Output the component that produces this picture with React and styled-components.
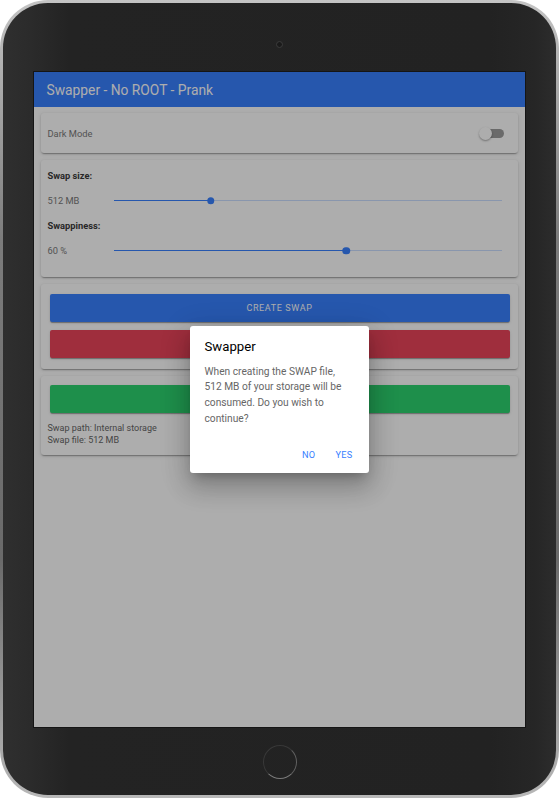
import React from 'react';
import styled, { createGlobalStyle } from 'styled-components';

const GlobalStyle = createGlobalStyle`
  html, body {
    margin: 0;
    padding: 0;
    background: #ffffff;
  }
  body {
    font-family: Roboto, "Liberation Sans", Arial, sans-serif;
  }
`;

const PRIMARY = '#3880ff';
const DANGER = '#eb445a';
const SUCCESS = '#2dd36f';

const Device = styled.div`
  width: 559px;
  height: 798px;
  box-sizing: border-box;
  padding: 3px;
  border-radius: 48px;
  background: linear-gradient(180deg, #c4c4c4 0%, #7c7c7c 30%, #6a6a6a 70%, #b8b8b8 100%);
`;

const Bezel = styled.div`
  height: 100%;
  border-radius: 45px;
  display: flex;
  flex-direction: column;
  align-items: center;
  background: linear-gradient(90deg, #2f2f2f 0%, #2b2b2b 5%, #232323 12%, #222222 88%, #262626 96%, #2c2c2c 100%);
`;

const TopBezel = styled.div`
  height: 69px;
  box-sizing: border-box;
  padding-top: 38px;
  display: flex;
  justify-content: center;
`;

const Camera = styled.div`
  width: 7px;
  height: 7px;
  border-radius: 50%;
  background: #1a1a1a;
  border: 1px solid #3c3c3c;
  box-sizing: border-box;
`;

const BottomBezel = styled.div`
  flex: 1;
  display: flex;
  align-items: center;
  justify-content: center;
  padding-top: 2px;
`;

const HomeButton = styled.div`
  width: 34px;
  height: 34px;
  box-sizing: border-box;
  border-radius: 50%;
  border: 1.5px solid #383838;
  border-right-color: #606060;
  border-bottom-color: #7a7a7a;
`;

const Screen = styled.div`
  position: relative;
  width: 491px;
  height: 655px;
  margin-left: -1px;
  background: #ffffff;
  overflow: hidden;
  outline: 1px solid #151515;
`;

const Toolbar = styled.header`
  height: 35px;
  display: flex;
  align-items: center;
  padding-left: 13px;
  background: ${PRIMARY};
  color: #ffffff;
`;

const Title = styled.div`
  font-size: 13.8px;
  font-weight: 400;
`;

const Content = styled.main`
  display: flex;
  flex-direction: column;
  gap: 7px;
  padding: 6px 7px;
`;

const Card = styled.section`
  background: #ffffff;
  border-radius: 3px;
  box-shadow: 0 2px 1px -1px rgba(0, 0, 0, 0.2), 0 1px 2px 0 rgba(0, 0, 0, 0.14), 0 1px 4px 0 rgba(0, 0, 0, 0.12);
  padding: ${(p) => p.$pad || '0'};
  display: flex;
  flex-direction: column;
`;

const ToggleRow = styled.div`
  height: 40px;
  display: flex;
  align-items: center;
  justify-content: space-between;
  padding: 0 14px 0 7px;
`;

const Label = styled.span`
  font-size: 9.3px;
  color: ${(p) => (p.$bold ? '#3a3a3a' : '#7a7a7a')};
  font-weight: ${(p) => (p.$bold ? 700 : 400)};
`;

const Toggle = styled.div`
  position: relative;
  width: 22px;
  height: 9px;
  border-radius: 5px;
  background: #9c9c9c;
`;

const ToggleKnob = styled.div`
  position: absolute;
  left: -3px;
  top: -2px;
  width: 13px;
  height: 13px;
  border-radius: 50%;
  background: #ffffff;
  box-shadow: 0 1px 2px rgba(0, 0, 0, 0.35);
`;

const Row = styled.div`
  height: 25px;
  display: flex;
  align-items: center;
`;

const ValueLabel = styled(Label)`
  width: 66px;
  flex: none;
`;

const Track = styled.div`
  position: relative;
  flex: 1;
  height: 1.5px;
  background: #cbdeff;
`;

const Fill = styled.div`
  height: 100%;
  background: ${PRIMARY};
`;

const Knob = styled.div`
  position: absolute;
  top: 50%;
  width: 7.5px;
  height: 7.5px;
  border-radius: 50%;
  background: ${PRIMARY};
  transform: translate(-50%, -50%);
`;

const Button = styled.button`
  height: 28px;
  width: 100%;
  border: none;
  border-radius: 2px;
  background: ${(p) => p.$color};
  color: #ffffff;
  font-family: inherit;
  font-size: 9px;
  font-weight: 400;
  letter-spacing: 0.07em;
  text-transform: uppercase;
  box-shadow: 0 2px 1px -1px rgba(0, 0, 0, 0.2), 0 1px 1px 0 rgba(0, 0, 0, 0.14), 0 1px 3px 0 rgba(0, 0, 0, 0.12);
`;

const ButtonStack = styled.div`
  display: flex;
  flex-direction: column;
  gap: 8px;
`;

const Info = styled.div`
  margin: 9px 0 0 -2px;
  font-size: 9px;
  line-height: 12px;
  color: #666666;
`;

const Scrim = styled.div`
  position: absolute;
  inset: 0;
  background: rgba(0, 0, 0, 0.32);
  display: flex;
  align-items: center;
  justify-content: center;
`;

const Dialog = styled.div`
  width: 179px;
  box-sizing: border-box;
  background: #ffffff;
  border-radius: 3px;
  padding: 13px 15px 13px;
  box-shadow: 0 7px 10px -5px rgba(0, 0, 0, 0.25), 0 15px 24px 2px rgba(0, 0, 0, 0.16), 0 6px 28px 5px rgba(0, 0, 0, 0.12);
`;

const DialogTitle = styled.h2`
  margin: 0 0 10px;
  font-size: 13.2px;
  font-weight: 400;
  color: #000000;
`;

const DialogText = styled.p`
  margin: 0;
  font-size: 10.2px;
  line-height: 15.7px;
  color: #666666;
`;

const Actions = styled.div`
  display: flex;
  justify-content: flex-end;
  gap: 20px;
  margin-top: 23px;
  padding-right: 1px;
`;

const Action = styled.span`
  font-size: 9.2px;
  font-weight: 400;
  color: ${PRIMARY};
  letter-spacing: 0.03em;
`;

function Slider({ value }) {
  return (
    <Track>
      <Fill style={{ width: `${value}%` }} />
      <Knob style={{ left: `${value}%` }} />
    </Track>
  );
}

export default function App() {
  return (
    <>
      <GlobalStyle />
      <Device>
        <Bezel>
          <TopBezel>
            <Camera />
          </TopBezel>
          <Screen>
            <Toolbar>
              <Title>Swapper - No ROOT - Prank</Title>
            </Toolbar>
            <Content>
              <Card>
                <ToggleRow>
                  <Label>Dark Mode</Label>
                  <Toggle>
                    <ToggleKnob />
                  </Toggle>
                </ToggleRow>
              </Card>
              <Card $pad="3px 16px 14px 7px">
                <Row>
                  <Label $bold>Swap size:</Label>
                </Row>
                <Row>
                  <ValueLabel>512 MB</ValueLabel>
                  <Slider value={25} />
                </Row>
                <Row>
                  <Label $bold>Swappiness:</Label>
                </Row>
                <Row>
                  <ValueLabel>60 %</ValueLabel>
                  <Slider value={60} />
                </Row>
              </Card>
              <Card $pad="10px 8px 11px 9px">
                <ButtonStack>
                  <Button $color={PRIMARY}>Create swap</Button>
                  <Button $color={DANGER} aria-label="Delete swap" />
                </ButtonStack>
              </Card>
              <Card $pad="9px 8px 9px 9px">
                <Button $color={SUCCESS} aria-label="Activate swap" />
                <Info>
                  Swap path: Internal storage
                  <br />
                  Swap file: 512 MB
                </Info>
              </Card>
            </Content>
            <Scrim>
              <Dialog>
                <DialogTitle>Swapper</DialogTitle>
                <DialogText>
                  When creating the SWAP file, 512 MB of your storage will be consumed. Do you wish to continue?
                </DialogText>
                <Actions>
                  <Action>NO</Action>
                  <Action>YES</Action>
                </Actions>
              </Dialog>
            </Scrim>
          </Screen>
          <BottomBezel>
            <HomeButton />
          </BottomBezel>
        </Bezel>
      </Device>
    </>
  );
}
